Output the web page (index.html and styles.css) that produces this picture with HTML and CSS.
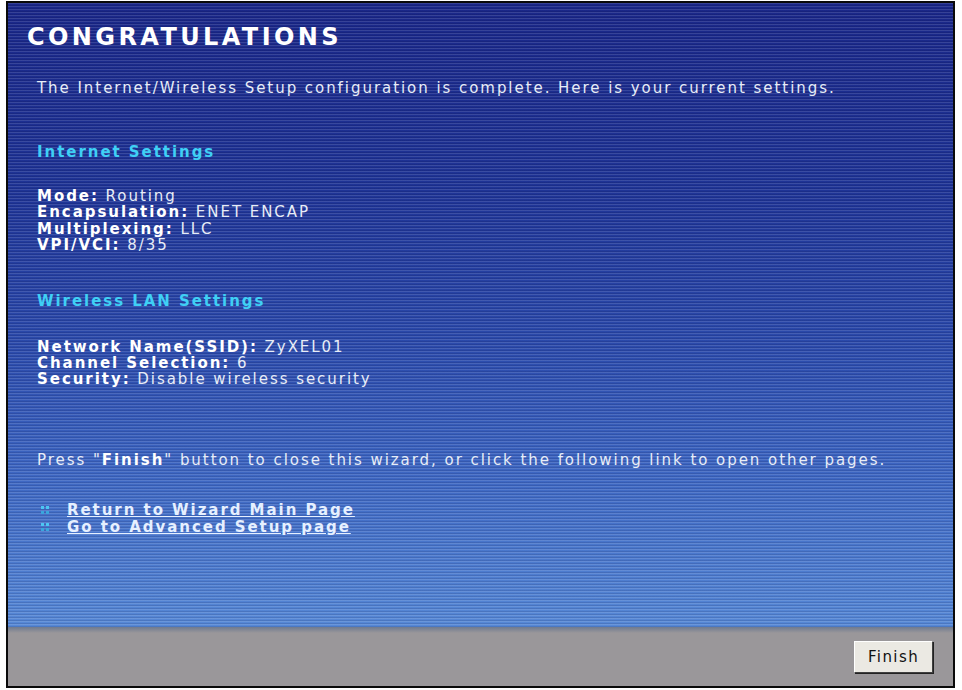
FILE: index.html
```html
<!DOCTYPE html>
<html>
<head>
<meta charset="utf-8">
<link rel="stylesheet" href="styles.css">
</head>
<body>
<div class="frame">
  <div class="panel">
    <h1 class="title">CONGRATULATIONS</h1>
    <div class="content">
      <p class="intro">The Internet/Wireless Setup configuration is complete. Here is your current settings.</p>
      <h2 class="section">Internet Settings</h2>
      <div class="rows">
        <div><b>Mode:</b> Routing</div>
        <div><b>Encapsulation:</b> ENET ENCAP</div>
        <div><b>Multiplexing:</b> LLC</div>
        <div><b>VPI/VCI:</b> 8/35</div>
      </div>
      <h2 class="section section-wl">Wireless LAN Settings</h2>
      <div class="rows rows-wl">
        <div><b>Network Name(SSID):</b> ZyXEL01</div>
        <div><b>Channel Selection:</b> 6</div>
        <div><b>Security:</b> Disable wireless security</div>
      </div>
      <p class="press">Press "<b>Finish</b>" button to close this wizard, or click the following link to open other pages.</p>
      <div class="links">
        <a class="link" href="#"><span class="dots"><i></i><i></i><i></i><i></i></span><span class="ltext">Return to Wizard Main Page</span></a>
        <a class="link" href="#"><span class="dots"><i></i><i></i><i></i><i></i></span><span class="ltext">Go to Advanced Setup page</span></a>
      </div>
    </div>
  </div>
  <div class="footer">
    <button class="btn">Finish</button>
  </div>
</div>
</body>
</html>
```

FILE: styles.css
```css
html, body {
  margin: 0;
  padding: 0;
  background: #ffffff;
}
.frame {
  margin: 1px 0 0 6px;
  width: 945px;
  height: 683px;
  border: 2px solid #0a0a0a;
  display: flex;
  flex-direction: column;
  overflow: hidden;
}
.panel {
  flex: 1;
  background:
    repeating-linear-gradient(to bottom, rgba(255,255,255,0.12) 0 1px, rgba(0,0,0,0) 1px 2px, rgba(0,0,40,0.12) 2px 3px),
    linear-gradient(to bottom, #1a2788 0%, #1f3496 30%, #2b4aab 55%, #3d66c2 75%, #5688d6 100%);
  font-family: "DejaVu Sans", Verdana, sans-serif;
  color: #e8edf7;
}
.title {
  margin: 0;
  padding: 21px 0 0 19px;
  font-size: 24px;
  line-height: 26px;
  font-weight: bold;
  letter-spacing: 3.4px;
  color: #ffffff;
}
.content {
  padding: 0 0 0 29px;
  font-size: 15px;
  letter-spacing: 1.95px;
}
.intro {
  margin: 29px 0 0 0;
  line-height: 18px;
}
.section {
  margin: 46px 0 0 0;
  font-size: 15px;
  line-height: 18px;
  color: #3fd0f5;
}
.section-wl {
  margin-top: 38px;
}
.rows {
  margin-top: 27px;
  line-height: 16.4px;
}
.rows-wl {
  margin-top: 29px;
}
.rows b {
  color: #ffffff;
}
.press {
  margin: 63px 0 0 0;
  line-height: 18px;
}
.press b {
  color: #ffffff;
}
.links {
  margin-top: 33px;
  display: flex;
  flex-direction: column;
  line-height: 17px;
}
.link {
  display: flex;
  align-items: center;
  gap: 18px;
  padding-left: 4px;
  color: #e6f0ff;
  font-weight: bold;
  text-decoration: none;
}
.ltext {
  text-decoration: underline;
}
.dots {
  width: 8px;
  height: 8px;
  display: grid;
  grid-template-columns: 3px 3px;
  grid-template-rows: 3px 3px;
  gap: 2px;
}
.dots i {
  background: #4cc6f2;
}
.dots i:nth-child(3),
.dots i:nth-child(4) {
  background: #3aa6dc;
}
.footer {
  height: 59px;
  background: linear-gradient(to bottom, #6f7a90 0, #9a979a 6px, #9a979a 100%);
  display: flex;
  justify-content: flex-end;
  align-items: center;
  padding-right: 20px;
}
.btn {
  width: 79px;
  height: 32px;
  margin-top: 1px;
  background: #ebe9e3;
  border: 1px solid #ffffff;
  border-right-color: #404040;
  border-bottom-color: #404040;
  box-shadow: 1px 1px 0 #222;
  font-family: "DejaVu Sans", Verdana, sans-serif;
  font-size: 15px;
  letter-spacing: 1.4px;
  color: #111;
}
```
